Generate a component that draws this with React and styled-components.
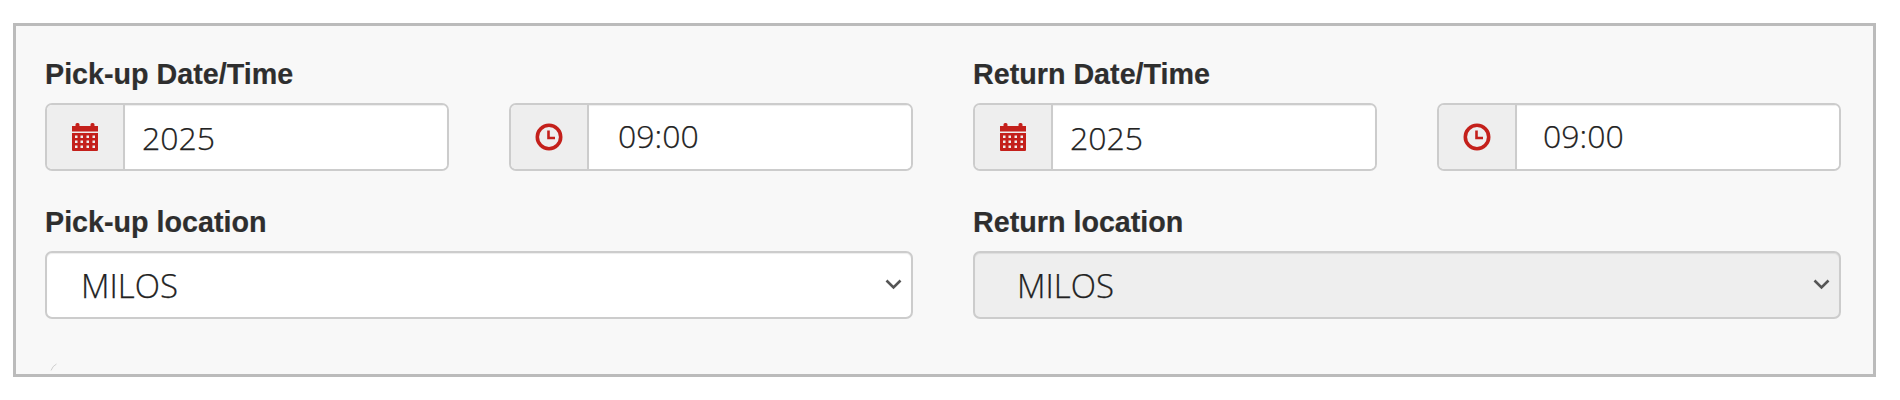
import React from 'react'
import styled, { createGlobalStyle } from 'styled-components'

const GlobalStyle = createGlobalStyle`
  html, body { margin: 0; padding: 0; background: #fff; }
  * { box-sizing: border-box; }
`

const Panel = styled.form`
  position: relative;
  width: 1863px;
  height: 354px;
  margin: 23px 0 0 13px;
  padding: 32px 31px 0 29px;
  background: #f8f8f8;
  border: 3px solid #bbbbbb;
  display: grid;
  grid-template-columns: 868px 868px;
  column-gap: 60px;
  row-gap: 35px;
  align-content: start;
`

const Field = styled.div`
  display: flex;
  flex-direction: column;
`

const Label = styled.label`
  font-family: "Liberation Sans", Arial, sans-serif;
  font-weight: 700;
  font-size: 28.7px;
  line-height: 33px;
  color: #2e2e2e;
  margin-bottom: 12px;
  -webkit-text-stroke: 0.2px #2e2e2e;
`

const Pair = styled.div`
  display: grid;
  grid-template-columns: 404px 404px;
  column-gap: 60px;
`

const InputGroup = styled.div`
  display: flex;
  height: 68px;
  border: 2px solid #cccccc;
  border-radius: 7px;
  overflow: hidden;
  background: #fff;
`

const Addon = styled.span`
  flex: 0 0 78px;
  display: flex;
  align-items: center;
  justify-content: center;
  background: #eeeeee;
  border-right: 2px solid #cccccc;
  color: #c4201b;
`

const TextInput = styled.input`
  flex: 1;
  min-width: 0;
  border: none;
  outline: none;
  background: #fff;
  padding: 0 0 ${p => p.$lift || 0}px ${p => p.$pad}px;
  font-family: "Open Sans", sans-serif;
  font-weight: 300;
  font-size: 32px;
  color: #222;
  -webkit-text-stroke: 0.25px #222;
  box-shadow: inset 0 1px 1px rgba(0, 0, 0, 0.075);
`

const SelectWrap = styled.div`
  position: relative;
  height: 68px;
`

const Select = styled.select`
  appearance: none;
  width: 100%;
  height: 100%;
  border: 2px solid #cccccc;
  border-radius: 7px;
  outline: none;
  padding: 0 0 0 ${p => (p.disabled ? 42 : 34)}px;
  background: ${p => (p.disabled ? '#eeeeee' : '#fff')};
  font-family: "Open Sans", sans-serif;
  font-weight: 300;
  font-size: 33px;
  color: #222;
  -webkit-text-stroke: 0.25px #222;
  opacity: 1;
  box-shadow: inset 0 1px 1px rgba(0, 0, 0, 0.075);
`

const Chevron = styled.svg`
  position: absolute;
  right: 11px;
  top: 28px;
  width: 17px;
  height: 11px;
  pointer-events: none;
`

const Tick = styled.svg`
  position: absolute;
  left: 34px;
  bottom: 3px;
  width: 8px;
  height: 8px;
`

const CalendarIcon = () => (
  <svg width="26" height="28" viewBox="0 0 26 28" fill="currentColor">
    <path d="M0 3h3.5V1.5Q3.5 0 5 0h1q1.500 0 1.500 1.500V3h11V1.500Q18.500 0 20 0h1q1.500 0 1.500 1.500V3H26v5.500H0z" />
    <path
      fillRule="evenodd"
      d="M0 10h26v17q0 1-1 1H1q-1 0-1-1zM3 12.500v2.500h2.500v-2.500zM8.500 12.500v2.500H11v-2.500zM14.500 12.500v2.500H17v-2.500zM20.500 12.500v2.500H23v-2.500zM3 17.500v2.500h2.500v-2.500zM8.500 17.500v2.500H11v-2.500zM14.500 17.500v2.500H17v-2.500zM20.500 17.500v2.500H23v-2.500zM3 22.500v2.500h2.500v-2.500zM8.500 22.500v2.500H11v-2.500zM14.500 22.500v2.500H17v-2.500zM20.500 22.500v2.500H23v-2.500z"
    />
  </svg>
)

const ClockIcon = () => (
  <svg width="28" height="28" viewBox="0 0 28 28" fill="none" stroke="currentColor">
    <circle cx="14" cy="14" r="11.7" strokeWidth="3.6" />
    <path d="M13.500 7.500V15H20" strokeWidth="2.600" />
  </svg>
)

function DateTime({ label, timePad }) {
  return (
    <Field>
      <Label>{label}</Label>
      <Pair>
        <InputGroup>
          <Addon><CalendarIcon /></Addon>
          <TextInput $pad={17} readOnly value="2025" />
        </InputGroup>
        <InputGroup>
          <Addon><ClockIcon /></Addon>
          <TextInput $pad={timePad} $lift={3} readOnly value="09:00" />
        </InputGroup>
      </Pair>
    </Field>
  )
}

function Location({ label, disabled }) {
  return (
    <Field>
      <Label>{label}</Label>
      <SelectWrap>
        <Select disabled={disabled} defaultValue="MILOS">
          <option>MILOS</option>
        </Select>
        <Chevron viewBox="0 0 17 11" fill="none" stroke="#555" strokeWidth="2.600">
          <path d="M1.500 1.500L8.500 8.500L15.500 1.500" />
        </Chevron>
      </SelectWrap>
    </Field>
  )
}

export default function App() {
  return (
    <>
      <GlobalStyle />
      <Panel>
        <DateTime label="Pick-up Date/Time" timePad={29} />
        <DateTime label="Return Date/Time" timePad={26} />
        <Location label="Pick-up location" />
        <Location label="Return location" disabled />
        <Tick viewBox="0 0 8 8" fill="none" stroke="#c4c4c4" strokeWidth="0.800">
          <path d="M1 7.500Q2.500 3 6.500 1" />
        </Tick>
      </Panel>
    </>
  )
}
